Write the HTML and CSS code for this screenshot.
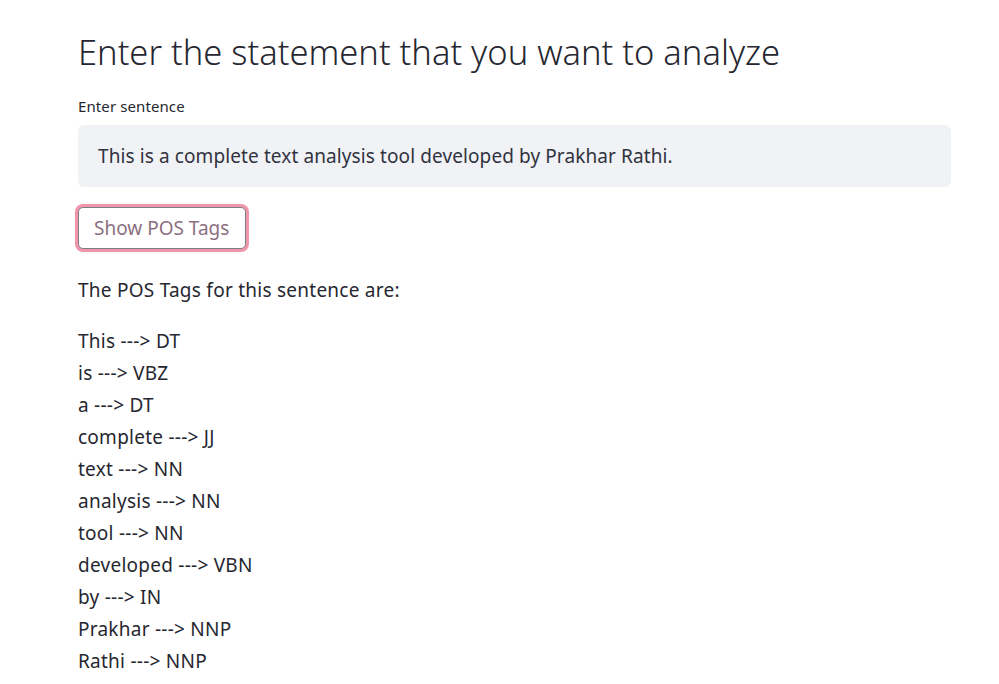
FILE: index.html
```html
<!DOCTYPE html>
<html>
<head>
<meta charset="utf-8">
<link rel="stylesheet" href="styles.css">
</head>
<body>
<main class="page">
  <h1 class="title">Enter the statement that you want to analyze</h1>
  <label class="label">Enter sentence</label>
  <div class="input">This is a complete text analysis tool developed by Prakhar Rathi.</div>
  <div class="btn-row"><button class="btn">Show POS Tags</button></div>
  <p class="intro">The POS Tags for this sentence are:</p>
  <div class="tags">
    <div class="tag">This ---&gt; DT</div>
    <div class="tag">is ---&gt; VBZ</div>
    <div class="tag">a ---&gt; DT</div>
    <div class="tag">complete ---&gt; JJ</div>
    <div class="tag">text ---&gt; NN</div>
    <div class="tag">analysis ---&gt; NN</div>
    <div class="tag">tool ---&gt; NN</div>
    <div class="tag">developed ---&gt; VBN</div>
    <div class="tag">by ---&gt; IN</div>
    <div class="tag">Prakhar ---&gt; NNP</div>
    <div class="tag">Rathi ---&gt; NNP</div>
  </div>
</main>
</body>
</html>
```

FILE: styles.css
```css
html, body {
  margin: 0;
  padding: 0;
  background: #ffffff;
}
body {
  font-family: "Noto Sans", "Open Sans", sans-serif;
  color: #262730;
  overflow: hidden;
}
.page {
  width: 873px;
  padding: 30px 0 0 78px;
}
.title {
  margin: 0;
  font-size: 34.5px;
  font-weight: 300;
  line-height: 44px;
  color: #262730;
}
.label {
  display: block;
  margin-top: 23px;
  font-size: 15px;
  letter-spacing: 0.1px;
  line-height: 18px;
}
.input {
  margin-top: 10px;
  height: 62px;
  box-sizing: border-box;
  background: #f0f2f6;
  border-radius: 6px;
  padding: 0 20px;
  display: flex;
  align-items: center;
  font-size: 19px;
  letter-spacing: 0.1px;
  color: #31333f;
}
.btn-row {
  margin-top: 17px;
  margin-left: -3px;
}
.btn {
  font-family: inherit;
  font-size: 19px;
  color: #8c6f80;
  background: #fff;
  border: 1px solid #7e7f86;
  border-radius: 5px;
  box-shadow: 0 0 0 3px #f095aa;
  margin: 3px;
  padding: 0 0 0 15px;
  text-align: left;
  height: 42px;
  width: 168px;
}
.intro {
  margin: 22px 0 0;
  font-size: 19px;
  letter-spacing: 0.25px;
  line-height: 32px;
}
.tags {
  margin-top: 19px;
  font-size: 19px;
  letter-spacing: 0.25px;
  line-height: 32px;
}
```
